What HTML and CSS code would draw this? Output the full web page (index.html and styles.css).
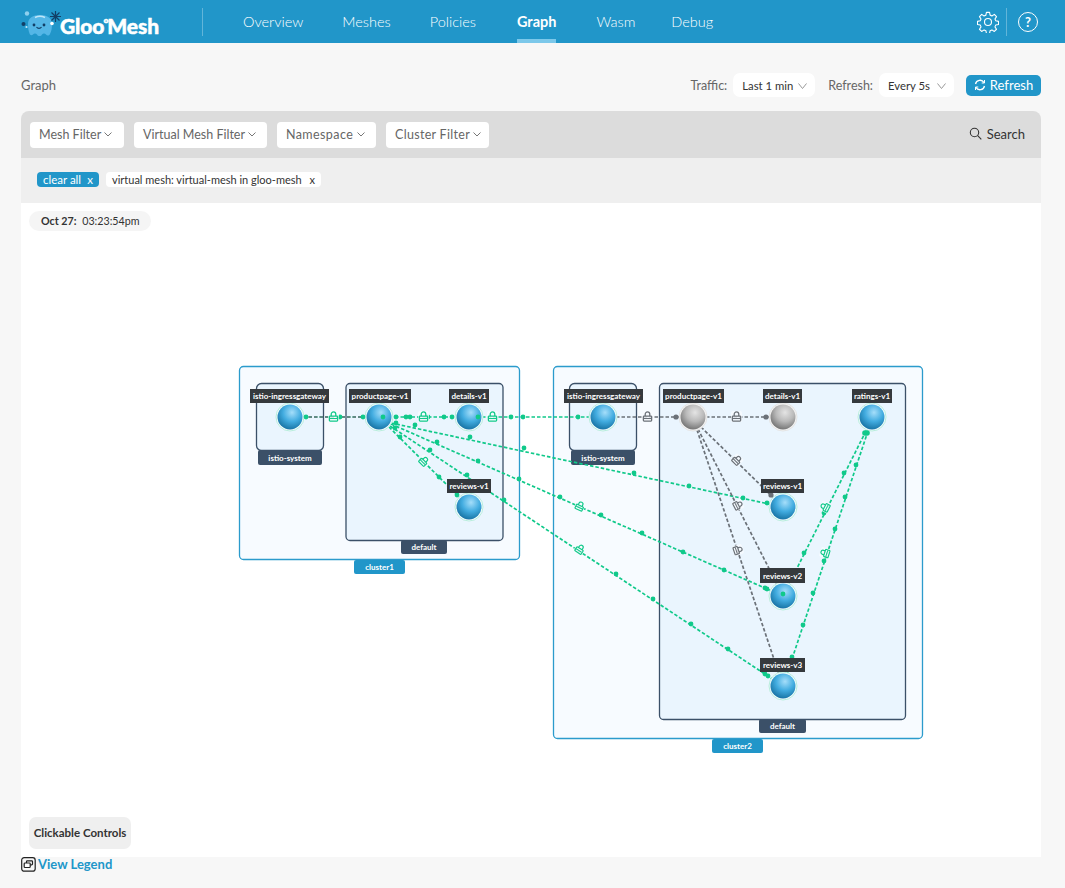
FILE: index.html
```html
<!DOCTYPE html>
<html lang="en">
<head>
  <meta charset="UTF-8" />
  <meta name="viewport" content="width=device-width, initial-scale=1.0" />
  <title>Gloo Mesh - Graph</title>
  <link rel="stylesheet" href="styles.css">
</head>
<body>
  <header class="topbar">
    <div class="logo">
      <svg class="logo-mark" width="40" height="30" viewBox="0 0 40 30">
        <circle cx="6" cy="6.500" r="2.200" fill="#8fd0ee"/>
        <circle cx="2.500" cy="17" r="2" fill="#123f66"/>
        <circle cx="5.500" cy="20" r="1.100" fill="#bfe6f8"/>
        <path d="M7 17c0-6 5-9 12-9s12 3 12 9c0 4-.5 7-2 10-1 2-3 2-4 .5-1-1.500-3-1.500-4 0-1 2-4 2-5 0-1-1.500-3-1.500-4 0-1 1-3 1-3.500-1C7.500 24 7 21 7 17z" fill="#53b6e6"/>
        <path d="M14 10.500c3-1.500 7-1.500 10 0" fill="none" stroke="#bfe6f8" stroke-width="1.500"/>
        <circle cx="13" cy="18" r="1.400" fill="#123f66"/>
        <circle cx="23" cy="18" r="1.400" fill="#123f66"/>
        <path d="M15.500 20c1.200 1.800 3.800 1.800 5 0" fill="none" stroke="#123f66" stroke-width="1.100"/>
        <circle cx="31" cy="16.500" r="1.800" fill="#fff"/>
        <path d="M30.500 5.500l8 8M38.500 5.500l-8 8M34.500 4v11M29 9.500h11" stroke="#123f66" stroke-width="1.200"/>
      </svg>
      <span class="logo-text">Gloo<span class="logo-o">°</span>Mesh</span>
    </div>
    <nav class="main-nav">
      <a href="#">Overview</a>
      <a href="#">Meshes</a>
      <a href="#">Policies</a>
      <a href="#" class="active">Graph</a>
      <a href="#">Wasm</a>
      <a href="#" class="nav-last">Debug</a>
    </nav>
    <div class="top-icons">
      <svg class="gear" width="22" height="22" viewBox="0 0 24 24" fill="none" stroke="#fff" stroke-width="1.200" stroke-linejoin="round">
        <circle cx="12" cy="12" r="3.800"/>
        <path d="M10.300 1.500h3.400l.6 3 2 .9 2.600-1.700 2.400 2.400-1.700 2.600.9 2 3 .6v3.400l-3 .6-.9 2 1.700 2.600-2.400 2.400-2.600-1.700-2 .9-.6 3h-3.400l-.6-3-2-.9-2.600 1.700-2.400-2.400 1.700-2.600-.9-2-3-.6v-3.400l3-.6.9-2-1.700-2.600 2.400-2.400 2.600 1.700 2-.9z"/>
      </svg>
      <span class="help">?</span>
    </div>
  </header>

  <main class="page">
    <div class="page-head">
      <h1>Graph</h1>
      <div class="page-controls">
        <label>Traffic:</label>
        <div class="select select-traffic">Last 1 min <svg class="chev" width="9" height="6" viewBox="0 0 9 6"><path d="M.5.500L4.500 5.500 8.500.5"/></svg></div>
        <label>Refresh:</label>
        <div class="select select-refresh">Every 5s <svg class="chev" width="9" height="6" viewBox="0 0 9 6"><path d="M.5.500L4.500 5.500 8.500.5"/></svg></div>
        <button class="refresh-btn">
          <svg width="12" height="12" viewBox="0 0 12 12" fill="none" stroke="#fff" stroke-width="1.300"><path d="M1.500 5A4.600 4.600 0 0 1 10 3.600M10.500 7A4.600 4.600 0 0 1 2 8.400"/><path d="M10.500 1v3H7.700M1.500 11V8h2.800" stroke-width="1"/></svg>
          Refresh
        </button>
      </div>
    </div>

    <section class="filter-panel">
      <div class="filter-row">
        <button class="filter-btn f-mesh">Mesh Filter <svg class="chev-sm" width="8" height="5" viewBox="0 0 8 5"><path d="M.5.500L4 4 7.500.5"/></svg></button>
        <button class="filter-btn f-virtual">Virtual Mesh Filter <svg class="chev-sm" width="8" height="5" viewBox="0 0 8 5"><path d="M.5.500L4 4 7.500.5"/></svg></button>
        <button class="filter-btn f-ns">Namespace <svg class="chev-sm" width="8" height="5" viewBox="0 0 8 5"><path d="M.5.500L4 4 7.500.5"/></svg></button>
        <button class="filter-btn f-cluster">Cluster Filter <svg class="chev-sm" width="8" height="5" viewBox="0 0 8 5"><path d="M.5.500L4 4 7.500.5"/></svg></button>
        <div class="search">
          <svg width="13" height="13" viewBox="0 0 13 13" fill="none" stroke="#333" stroke-width="1.100"><circle cx="5.500" cy="5.500" r="4.200"/><path d="M8.700 8.700l3.600 3.600"/></svg>
          Search
        </div>
      </div>
      <div class="chip-row">
        <span class="chip chip-clear">clear all <b>x</b></span>
        <span class="chip">virtual mesh: virtual-mesh in gloo-mesh <b>x</b></span>
      </div>
    </section>

    <section class="graph">
      <svg class="graph-svg" width="1020" height="654" viewBox="21 203 1020 654">
        <defs>
          <radialGradient id="blueBall" cx="0.58" cy="0.32" r="0.72">
            <stop offset="0" stop-color="#a5defa"/>
            <stop offset="0.5" stop-color="#42ace0"/>
            <stop offset="1" stop-color="#146f9f"/>
          </radialGradient>
          <radialGradient id="grayBall" cx="0.58" cy="0.32" r="0.72">
            <stop offset="0" stop-color="#e4e4e4"/>
            <stop offset="0.5" stop-color="#b9b9b9"/>
            <stop offset="1" stop-color="#6f6f6f"/>
          </radialGradient>
          <symbol id="lock" viewBox="0 0 12 12" overflow="visible">
            <rect x="0" y="0" width="12" height="12" rx="2" fill="#f7fbff" opacity="0.8"/>
            <path d="M3.500 5.500V3.500a2.500 2.500 0 0 1 5 0v2" fill="none" stroke="currentColor" stroke-width="1.400"/>
            <rect x="1.500" y="5.500" width="9" height="5.500" rx="0.800" fill="none" stroke="currentColor" stroke-width="1.400"/>
            <path d="M2 8.200h8" stroke="currentColor" stroke-width="1.200"/>
          </symbol>
          <symbol id="bluenode" viewBox="-15 -15 30 30" overflow="visible">
            <circle r="14" class="halo-blue"/>
            <circle r="12.500" fill="url(#blueBall)"/>
          </symbol>
          <symbol id="graynode" viewBox="-15 -15 30 30" overflow="visible">
            <circle r="14" class="halo-gray"/>
            <circle r="12.500" fill="url(#grayBall)"/>
          </symbol>
        </defs>

        <!-- cluster boxes -->
        <rect class="cluster" x="239.500" y="366.500" width="280" height="193" rx="4"/>
        <rect class="cluster" x="553.500" y="366.500" width="369" height="372" rx="4"/>
        <rect class="tag-cluster" x="354" y="560" width="51" height="14" rx="2"/>
        <rect class="tag-cluster" x="712" y="739" width="51" height="14" rx="2"/>
        <text class="tag-text" x="379.500" y="570">cluster1</text>
        <text class="tag-text" x="737.500" y="749">cluster2</text>

        <!-- namespace boxes -->
        <rect class="ns" x="256.500" y="383.500" width="67" height="67" rx="5"/>
        <rect class="ns" x="346" y="383.500" width="157" height="157" rx="4"/>
        <rect class="ns" x="569.500" y="383.500" width="67" height="67" rx="5"/>
        <rect class="ns" x="659.500" y="383.500" width="246" height="336" rx="4"/>
        <rect class="tag-ns" x="258" y="450" width="64" height="15" rx="2"/>
        <rect class="tag-ns" x="401" y="540" width="46" height="14" rx="2"/>
        <rect class="tag-ns" x="571" y="450" width="64" height="15" rx="2"/>
        <rect class="tag-ns" x="759" y="719" width="47" height="14" rx="2"/>
        <text class="tag-text" x="290" y="461">istio-system</text>
        <text class="tag-text" x="424" y="550">default</text>
        <text class="tag-text" x="603" y="461">istio-system</text>
        <text class="tag-text" x="782.500" y="729">default</text>

        <!-- green edges -->
        <g class="edge-green">
          <path d="M303 417H379"/>
          <path d="M395 417H469"/>
          <path d="M482 417H603"/>
          <path d="M391 423L783 507"/>
          <path d="M391 424L783 596"/>
          <path d="M390 426L783 686"/>
          <path d="M389 427L469 507"/>
          <path d="M866 431L783 596"/>
          <path d="M868 431L783 686"/>
        </g>
        <!-- gray edges -->
        <g class="edge-gray">
          <path d="M303 417H379"/>
          <path d="M616 417H693"/>
          <path d="M706 417H783"/>
          <path d="M701 427L783 507"/>
          <path d="M698 429L783 596"/>
          <path d="M697 430L783 686"/>
        </g>

        <!-- nodes -->
        <use href="#bluenode" x="275" y="402" width="30" height="30"/>
        <use href="#bluenode" x="364" y="402" width="30" height="30"/>
        <use href="#bluenode" x="454" y="402" width="30" height="30"/>
        <use href="#bluenode" x="454" y="492" width="30" height="30"/>
        <use href="#bluenode" x="588" y="402" width="30" height="30"/>
        <use href="#graynode" x="678" y="402" width="30" height="30"/>
        <use href="#graynode" x="768" y="402" width="30" height="30"/>
        <use href="#bluenode" x="857" y="402" width="30" height="30"/>
        <use href="#bluenode" x="768" y="492" width="30" height="30"/>
        <use href="#bluenode" x="768" y="581" width="30" height="30"/>
        <use href="#bluenode" x="768" y="671" width="30" height="30"/>

        <!-- traffic dots -->
        <g class="dots-green">
          <circle cx="306" cy="417" r="2.400"/><circle cx="340" cy="417" r="2.400"/><circle cx="363" cy="417" r="2.400"/>
          <circle cx="383" cy="417" r="2.400"/><circle cx="396" cy="417" r="2.400"/><circle cx="406" cy="417" r="2.400"/>
          <circle cx="410" cy="417" r="2.400"/><circle cx="428" cy="417" r="2.400"/><circle cx="444" cy="417" r="2.400"/>
          <circle cx="452" cy="417" r="2.400"/><circle cx="478" cy="417" r="2.400"/><circle cx="511" cy="417" r="2.400"/>
          <circle cx="523" cy="417" r="2.400"/><circle cx="578" cy="417" r="2.400"/>
          <circle cx="415" cy="425" r="2.400"/><circle cx="470" cy="437" r="2.400"/><circle cx="524" cy="448" r="2.400"/>
          <circle cx="634" cy="473" r="2.400"/><circle cx="689" cy="486" r="2.400"/><circle cx="743" cy="498" r="2.400"/><circle cx="767" cy="503" r="2.400"/>
          <circle cx="396" cy="423" r="2.400"/><circle cx="437" cy="442" r="2.400"/><circle cx="478" cy="461" r="2.400"/><circle cx="519" cy="479" r="2.400"/>
          <circle cx="560" cy="497" r="2.400"/><circle cx="601" cy="515" r="2.400"/><circle cx="642" cy="533" r="2.400"/><circle cx="683" cy="552" r="2.400"/>
          <circle cx="724" cy="570" r="2.400"/><circle cx="765" cy="588" r="2.400"/><circle cx="767" cy="589" r="2.400"/>
          <circle cx="395" cy="428" r="2.400"/><circle cx="430" cy="450" r="2.400"/><circle cx="467" cy="475" r="2.400"/><circle cx="504" cy="500" r="2.400"/>
          <circle cx="616" cy="574" r="2.400"/><circle cx="653" cy="599" r="2.400"/><circle cx="691" cy="624" r="2.400"/><circle cx="728" cy="649" r="2.400"/><circle cx="765" cy="674" r="2.400"/><circle cx="768" cy="676" r="2.400"/>
          <circle cx="400" cy="437" r="2.400"/><circle cx="439" cy="477" r="2.400"/><circle cx="457" cy="495" r="2.400"/>
          <circle cx="865" cy="433" r="2.800"/><circle cx="867" cy="433" r="2.800"/><circle cx="844" cy="473" r="2.400"/><circle cx="824" cy="513" r="2.400"/><circle cx="804" cy="553" r="2.400"/><circle cx="783" cy="594" r="2.400"/>
          <circle cx="856" cy="465" r="2.400"/><circle cx="845" cy="497" r="2.400"/><circle cx="835" cy="529" r="2.400"/><circle cx="824" cy="561" r="2.400"/>
          <circle cx="813" cy="593" r="2.400"/><circle cx="803" cy="625" r="2.400"/><circle cx="792" cy="657" r="2.400"/>
        </g>
        <g class="dots-gray">
          <circle cx="676" cy="417" r="2.600"/><circle cx="766" cy="417" r="2.600"/><circle cx="771" cy="495" r="2.600"/>
        </g>

        <!-- locks -->
        <g class="locks-green">
          <use href="#lock" x="328" y="411" width="11" height="11"/>
          <use href="#lock" x="418" y="411" width="11" height="11"/>
          <use href="#lock" x="487" y="411" width="11" height="11"/>
          <use href="#lock" x="419" y="456" width="10" height="10" transform="rotate(45 424 461)"/>
          <use href="#lock" x="575" y="501" width="10" height="10" transform="rotate(25 580 506)"/>
          <use href="#lock" x="575" y="544" width="10" height="10" transform="rotate(33 580 549)"/>
          <use href="#lock" x="820" y="502" width="10" height="10" transform="rotate(-63 825 507)"/>
          <use href="#lock" x="820" y="548" width="10" height="10" transform="rotate(-72 825 553)"/>
        </g>
        <g class="locks-gray">
          <use href="#lock" x="642" y="411" width="11" height="11"/>
          <use href="#lock" x="731" y="411" width="11" height="11"/>
          <use href="#lock" x="732" y="455" width="10" height="10" transform="rotate(45 737 460)"/>
          <use href="#lock" x="733" y="500" width="10" height="10" transform="rotate(63 738 505)"/>
          <use href="#lock" x="733" y="545" width="10" height="10" transform="rotate(71 738 550)"/>
        </g>

        <!-- node labels -->
        <rect class="node-tag" x="250" y="389" width="79" height="14"/><text class="node-text" x="289.500" y="399">istio-ingressgateway</text>
        <rect class="node-tag" x="349" y="389" width="62" height="14"/><text class="node-text" x="380" y="399">productpage-v1</text>
        <rect class="node-tag" x="449" y="389" width="40" height="14"/><text class="node-text" x="469" y="399">details-v1</text>
        <rect class="node-tag" x="447" y="479" width="44" height="14"/><text class="node-text" x="469" y="489">reviews-v1</text>
        <rect class="node-tag" x="564" y="389" width="79" height="14"/><text class="node-text" x="603.500" y="399">istio-ingressgateway</text>
        <rect class="node-tag" x="663" y="389" width="61" height="14"/><text class="node-text" x="693.500" y="399">productpage-v1</text>
        <rect class="node-tag" x="763" y="389" width="39" height="14"/><text class="node-text" x="782.500" y="399">details-v1</text>
        <rect class="node-tag" x="852" y="389" width="40" height="14"/><text class="node-text" x="872" y="399">ratings-v1</text>
        <rect class="node-tag" x="761" y="479" width="43" height="14"/><text class="node-text" x="782.500" y="489">reviews-v1</text>
        <rect class="node-tag" x="760" y="568" width="45" height="15"/><text class="node-text" x="782.500" y="579">reviews-v2</text>
        <rect class="node-tag" x="760" y="658" width="45" height="14"/><text class="node-text" x="782.500" y="668">reviews-v3</text>
      </svg>

      <div class="timestamp"><b>Oct 27:</b> 03:23:54pm</div>
      <div class="controls-box">Clickable Controls</div>
    </section>

    <a href="#" class="legend-link">
      <svg width="15" height="15" viewBox="0 0 15 15" fill="none" stroke="#222" stroke-width="1.200"><rect x="0.700" y="0.700" width="13.500" height="13.500" rx="2.500"/><rect x="5.500" y="3.800" width="6" height="4" rx="0.800"/><rect x="3.200" y="6" width="6" height="4.500" rx="0.800" fill="#fff"/></svg>
      View Legend
    </a>
  </main>
</body>
</html>
```

FILE: styles.css
```css
* {
  box-sizing: border-box;
}
body {
  font-family: Lato, "Open Sans", sans-serif;
  margin: 0;
  background: #f7f7f7;
  color: #333;
  height: 888px;
  overflow: hidden;
}

/* top bar */
.topbar {
  display: flex;
  align-items: center;
  height: 43px;
  background: #2196c9;
  padding-left: 21px;
  color: white;
}
.logo {
  display: flex;
  align-items: center;
  width: 182px;
  height: 28px;
  border-right: 1px solid #62b5d9;
}
.logo-mark {
  flex: none;
}
.logo-text {
  font-weight: 900;
  font-size: 21px;
  margin-left: -1px;
  padding-top: 7px;
  letter-spacing: -0.1px;
  -webkit-text-stroke: 0.5px white;
}
.logo-o {
  font-size: 12px;
  vertical-align: 6px;
  margin: 0 -1px;
}
.main-nav {
  display: flex;
  gap: 39px;
  height: 43px;
  margin-left: 40px;
}
.main-nav a {
  display: flex;
  align-items: center;
  color: white;
  text-decoration: none;
  font-size: 14.5px;
  font-weight: 300;
}
.main-nav a.active {
  font-weight: 700;
  border-bottom: 4px solid #7cc8ea;
  padding-top: 4px;
  margin-left: 2px;
  margin-right: 1px;
}
.main-nav a.nav-last {
  margin-left: -3px;
}
.top-icons {
  display: flex;
  align-items: center;
  margin-left: auto;
  margin-right: 27px;
}
.gear {
  margin-right: 7px;
}
.top-icons::before {
  content: "";
  order: 1;
  width: 1px;
  height: 28px;
  background: #62b5d9;
}
.help {
  order: 2;
  display: flex;
  align-items: center;
  justify-content: center;
  width: 20px;
  height: 20px;
  margin-left: 11px;
  border: 1.2px solid white;
  border-radius: 50%;
  font-size: 13px;
  font-weight: 700;
}

/* page */
.page {
  padding: 0 24px 0 21px;
}
.page-head {
  display: flex;
  align-items: center;
  justify-content: space-between;
  height: 68px;
  padding-top: 16px;
}
h1 {
  margin: 0;
  font-size: 13px;
  font-weight: 400;
  color: #666;
}
.page-controls {
  display: flex;
  align-items: center;
  font-size: 12.5px;
  color: #666;
}
.select {
  display: flex;
  align-items: center;
  justify-content: space-between;
  height: 24px;
  background: white;
  border-radius: 7px;
  padding: 0 8px 0 9px;
  margin-left: 6px;
  margin-right: 13px;
  font-size: 11.3px;
  color: #333;
}
.select-traffic {
  width: 82px;
}
.select-refresh {
  width: 75px;
  margin-right: 12px;
}
.chev {
  fill: none;
  stroke: #999;
  margin-top: 2px;
}
.refresh-btn {
  display: flex;
  align-items: center;
  justify-content: center;
  gap: 4px;
  width: 75px;
  height: 21px;
  padding: 0;
  border: 0;
  border-radius: 5px;
  background: #2196c9;
  color: white;
  font-family: inherit;
  font-size: 13px;
}

/* filters */
.filter-panel {
  border-radius: 8px 8px 0 0;
  overflow: hidden;
}
.filter-row {
  display: flex;
  align-items: center;
  gap: 10px;
  height: 47px;
  padding: 0 16px 0 9px;
  background: #dcdcdc;
}
.filter-btn {
  height: 26px;
  padding: 0 0 1px 9px;
  border: 0;
  border-radius: 4px;
  background: white;
  color: #666;
  font-family: inherit;
  font-size: 12.5px;
  text-align: left;
}
.f-mesh {
  width: 94px;
}
.f-virtual {
  width: 133px;
}
.f-ns {
  width: 99px;
  letter-spacing: 0.4px;
}
.f-cluster {
  width: 103px;
  letter-spacing: 0.3px;
}
.chev-sm {
  fill: none;
  stroke: #777;
  vertical-align: 2px;
}
.search {
  display: flex;
  align-items: center;
  gap: 5px;
  margin-left: auto;
  padding-bottom: 2px;
  font-size: 13px;
}
.chip-row {
  display: flex;
  align-items: center;
  gap: 7px;
  height: 45px;
  padding: 0 0 2px 16px;
  background: #efefef;
}
.chip {
  display: flex;
  justify-content: space-between;
  align-items: center;
  height: 15px;
  width: 215px;
  padding: 0 6px;
  border-radius: 4px;
  background: white;
  font-size: 11px;
}
.chip b {
  font-weight: 400;
}
.chip-clear {
  width: 62px;
  background: #2196c9;
  color: white;
  font-size: 11.5px;
}

/* graph canvas */
.graph {
  position: relative;
  display: flex;
  flex-direction: column;
  align-items: flex-start;
  justify-content: space-between;
  height: 654px;
  padding: 8px;
  background: white;
}
.graph-svg {
  position: absolute;
  left: 0;
  top: 0;
}
.timestamp {
  position: relative;
  height: 20px;
  width: 122px;
  line-height: 20px;
  padding-left: 12px;
  border-radius: 10px;
  background: #f5f5f5;
  font-size: 10.7px;
}
.timestamp b {
  margin-right: 3px;
}
.controls-box {
  position: relative;
  width: 102px;
  height: 32px;
  line-height: 31px;
  text-align: center;
  border-radius: 7px;
  background: #efefef;
  font-size: 11.5px;
  font-weight: 700;
}
.legend-link {
  display: flex;
  align-items: center;
  gap: 2px;
  height: 14px;
  color: #2196c9;
  font-size: 13px;
  font-weight: 700;
  text-decoration: none;
}

/* svg parts */
.cluster {
  fill: #f7fbff;
  stroke: #2b9bcc;
  stroke-width: 1.300;
}
.ns {
  fill: #eaf5fe;
  stroke: #3b5068;
  stroke-width: 1.300;
}
.tag-cluster {
  fill: #2196c9;
}
.tag-ns {
  fill: #3b5068;
}
.tag-text,
.node-text {
  fill: white;
  font-size: 8px;
  font-weight: 700;
  text-anchor: middle;
}
.node-tag {
  fill: #35393d;
}
.halo-blue {
  fill: #f4fbff;
  stroke: #b9eedd;
}
.halo-gray {
  fill: #f4f4f4;
  stroke: #e5e5e5;
}
.edge-green path {
  fill: none;
  stroke: #10c98a;
  stroke-width: 1.700;
  stroke-dasharray: 3.500 2;
}
.edge-gray path {
  fill: none;
  stroke: #6b7178;
  stroke-width: 1.700;
  stroke-dasharray: 3.500 2;
}
.dots-green {
  fill: #10c98a;
}
.dots-gray {
  fill: #6b7178;
}
.locks-green {
  color: #10c98a;
}
.locks-gray {
  color: #6b7178;
}
```
